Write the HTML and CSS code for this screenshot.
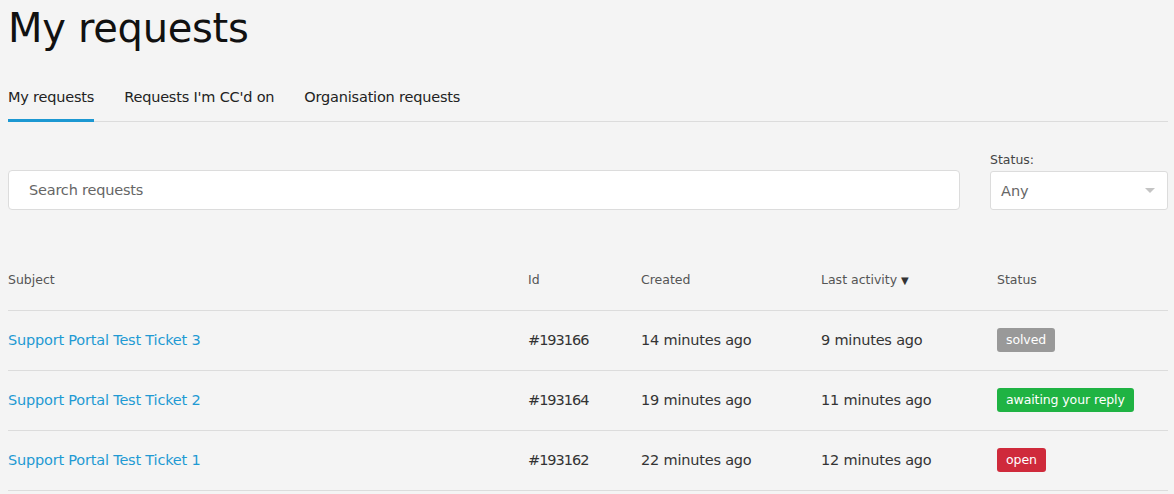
FILE: index.html
```html
<!DOCTYPE html>
<html lang="en">
<head>
<meta charset="utf-8">
<title>My requests</title>
<link rel="stylesheet" href="styles.css">
</head>
<body>
<main class="page">
  <h1 class="title">My requests</h1>
  <nav class="tabs">
    <a class="tab tab-active" href="#">My requests</a>
    <a class="tab" href="#">Requests I'm CC'd on</a>
    <a class="tab" href="#">Organisation requests</a>
  </nav>
  <div class="filters">
    <div class="search">Search requests</div>
    <div class="status-filter">
      <label class="status-label">Status:</label>
      <div class="select">
        <span>Any</span>
        <span class="caret"></span>
      </div>
    </div>
  </div>
  <div class="table">
    <div class="row head">
      <div>Subject</div>
      <div>Id</div>
      <div>Created</div>
      <div>Last activity <span class="sort">▼</span></div>
      <div>Status</div>
    </div>
    <div class="row">
      <div><a class="link" href="#">Support Portal Test Ticket 3</a></div>
      <div class="id">#193166</div>
      <div>14 minutes ago</div>
      <div>9 minutes ago</div>
      <div><span class="badge badge-solved">solved</span></div>
    </div>
    <div class="row">
      <div><a class="link" href="#">Support Portal Test Ticket 2</a></div>
      <div class="id">#193164</div>
      <div>19 minutes ago</div>
      <div>11 minutes ago</div>
      <div><span class="badge badge-awaiting">awaiting your reply</span></div>
    </div>
    <div class="row">
      <div><a class="link" href="#">Support Portal Test Ticket 1</a></div>
      <div class="id">#193162</div>
      <div>22 minutes ago</div>
      <div>12 minutes ago</div>
      <div><span class="badge badge-open">open</span></div>
    </div>
  </div>
</main>
</body>
</html>
```
FILE: styles.css
```css
html, body {
  margin: 0;
  background: #f4f4f4;
}
body {
  font-family: "DejaVu Sans", "Noto Sans", sans-serif;
  color: #333;
}
.page {
  width: 1160px;
  padding: 0 0 0 8px;
}
.title {
  margin: 0;
  padding-top: 4px;
  font-size: 40px;
  line-height: 48px;
  font-weight: 400;
  color: #111;
  letter-spacing: -0.3px;
}
.tabs {
  display: flex;
  gap: 30px;
  margin-top: 35px;
  border-bottom: 1px solid #dcdcdc;
}
.tab {
  font-size: 14.5px;
  line-height: 20px;
  color: #222;
  text-decoration: none;
  padding-bottom: 12px;
  border-bottom: 3px solid transparent;
  margin-bottom: -1px;
  letter-spacing: -0.2px;
}
.tab-active {
  border-bottom-color: #1c98d2;
}
.filters {
  display: flex;
  align-items: flex-end;
  gap: 30px;
  margin-top: 30px;
}
.search {
  flex: 1;
  height: 38px;
  background: #fff;
  border: 1px solid #dcdcdc;
  border-radius: 4px;
  padding-left: 20px;
  font-size: 14.5px;
  line-height: 38px;
  color: #666;
  letter-spacing: -0.2px;
}
.status-filter {
  width: 178px;
  display: flex;
  flex-direction: column;
  gap: 3px;
}
.status-label {
  font-size: 12.5px;
  line-height: 16px;
  color: #444;
}
.select {
  height: 37px;
  background: #fff;
  border: 1px solid #dcdcdc;
  border-radius: 3px;
  padding: 0 12px 0 10px;
  display: flex;
  align-items: center;
  justify-content: space-between;
  font-size: 14.5px;
  color: #666;
}
.caret {
  width: 0;
  height: 0;
  border-left: 5px solid transparent;
  border-right: 5px solid transparent;
  border-top: 5px solid #c4c4c4;
}
.table {
  margin-top: 41px;
}
.row {
  display: grid;
  grid-template-columns: 520px 113px 180px 176px 1fr;
  align-items: center;
  height: 57px;
  padding-bottom: 2px;
  border-bottom: 1px solid #dcdcdc;
  font-size: 14.5px;
  letter-spacing: -0.2px;
  color: #333;
}
.row.head {
  font-size: 12.5px;
  color: #555;
  letter-spacing: 0;
}
.row .id {
  letter-spacing: -1px;
}
.sort {
  font-size: 10px;
  color: #333;
}
.link {
  color: #1f9ad3;
  text-decoration: none;
}
.badge {
  display: inline-block;
  height: 24px;
  line-height: 24px;
  padding: 0 9px;
  border-radius: 3px;
  color: #fff;
  font-size: 12.5px;
  letter-spacing: -0.1px;
}
.badge-solved { background: #999; }
.badge-awaiting { background: #1fb343; }
.badge-open { background: #cf2a3b; }
```
